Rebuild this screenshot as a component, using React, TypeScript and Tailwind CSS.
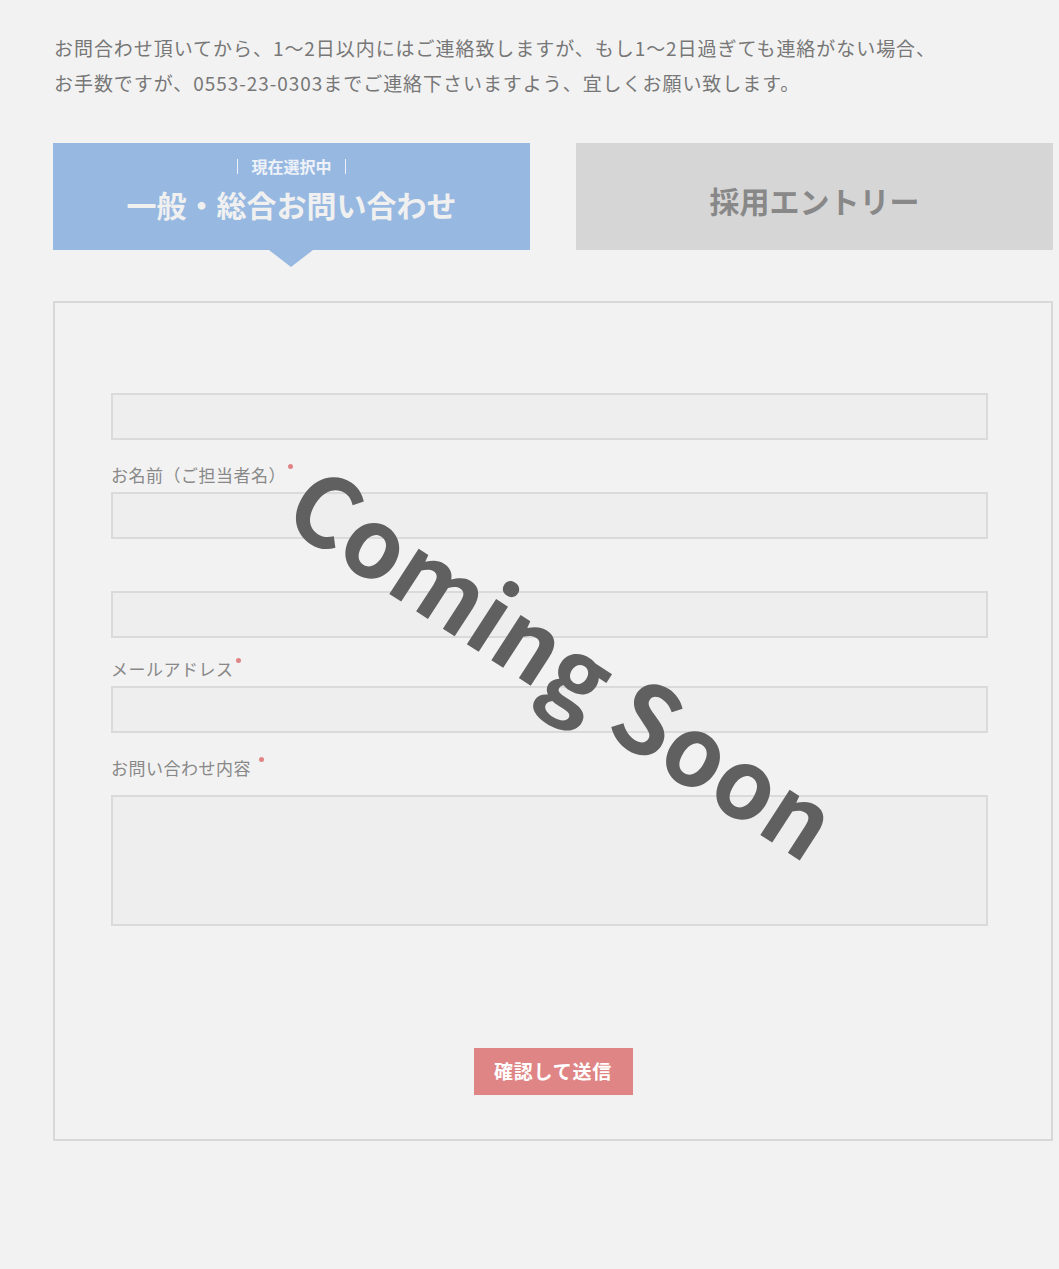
import React from "react";

const jp = { fontFamily: '"Noto Sans CJK JP", "Noto Sans", sans-serif' };

function Req({ gap }: { gap?: boolean }) {
  return (
    <span
      className={`inline-block w-[5px] h-[5px] rounded-full bg-[#e08585] align-top mt-[1px] ${gap ? "ml-[8px]" : "ml-[2px]"}`}
    />
  );
}

function Field({
  label,
  req,
  gapDot,
  className,
  labelGap,
  tall,
}: {
  label?: string;
  req?: boolean;
  gapDot?: boolean;
  className: string;
  labelGap?: string;
  tall?: boolean;
}) {
  return (
    <div className={className}>
      {label && (
        <div className={`h-[24px] leading-[24px] text-[17px] tracking-[0.03em] text-[#888] ${labelGap ?? "mb-[5px]"}`}>
          {label}
          {req && <Req gap={gapDot} />}
        </div>
      )}
      {tall ? (
        <textarea className="block w-[877px] h-[131px] bg-[#eeeeee] border-2 border-[#dadada] resize-none outline-none" />
      ) : (
        <input className="block w-[877px] h-[47px] bg-[#eeeeee] border-2 border-[#dadada] outline-none" />
      )}
    </div>
  );
}

export default function App() {
  return (
    <main className="relative min-h-[1269px] bg-[#f2f2f2] overflow-hidden" style={jp}>
      <div className="ml-[53px] w-[1000px] pt-[30px] pb-[128px]">
        <p className="text-[19px] leading-[35px] tracking-[0.05em] text-[#777] pl-[1px] whitespace-nowrap">
          お問合わせ頂いてから、1〜2日以内にはご連絡致しますが、もし1〜2日過ぎても連絡がない場合、
          <br />
          お手数ですが、0553-23-0303までご連絡下さいますよう、宜しくお願い致します。
        </p>

        <div className="mt-[43px] flex justify-between">
          <div className="relative w-[477px] h-[107px] bg-[#96b8e1] flex flex-col items-center">
            <div className="mt-[13px] flex items-center text-[16px] leading-[20px] font-bold text-[#eef2f8]">
              <span className="w-px h-[15px] bg-[#eef2f8]" />
              <span className="px-[13px]">現在選択中</span>
              <span className="w-px h-[15px] bg-[#eef2f8]" />
            </div>
            <div className="mt-[8px] text-[30px] leading-[40px] font-bold text-[#f0f0f0]">
              一般・総合お問い合わせ
            </div>
            <span className="absolute left-[216px] top-full w-0 h-0 border-l-[22px] border-r-[22px] border-t-[17px] border-l-transparent border-r-transparent border-t-[#96b8e1]" />
          </div>
          <div className="w-[477px] h-[107px] bg-[#d6d6d6] flex items-center justify-center pt-[6px]">
            <span className="text-[30px] leading-[40px] font-bold text-[#888]">採用エントリー</span>
          </div>
        </div>

        <div className="mt-[51px] h-[840px] border-2 border-[#d8d8d8] pl-[56px] pt-[90px]">
          <Field className="" />
          <Field className="mt-[23px]" label="お名前（ご担当者名）" req />
          <Field className="mt-[52px]" />
          <Field className="mt-[19px]" label="メールアドレス" req />
          <Field className="mt-[23px]" label="お問い合わせ内容" req gapDot labelGap="mb-[15px]" tall />
          <div className="mt-[122px] flex justify-center -ml-[56px]">
            <button className="w-[159px] h-[47px] bg-[#e08585] text-white text-[19px] font-bold tracking-[0.04em]">
              確認して送信
            </button>
          </div>
        </div>
      </div>

      <div
        className="absolute left-[565px] top-[659px] -translate-x-1/2 -translate-y-1/2 rotate-[33deg] whitespace-nowrap text-[96px] leading-none font-bold text-[#606060] pointer-events-none"
      >
        Coming Soon
      </div>
    </main>
  );
}
